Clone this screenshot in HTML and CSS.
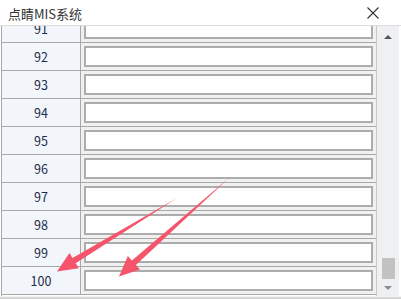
FILE: index.html
```html
<!DOCTYPE html>
<html lang="zh-CN">

<head>
	<meta charset="UTF-8">
	<title>点睛MIS系统</title>
	<link rel="stylesheet" href="styles.css">
</head>

<body>
	<div class="window">
		<div class="titlebar">
			<span class="title">点睛MIS系统</span>
			<span class="close">
				<svg width="12" height="12" viewBox="0 0 12 12">
					<path d="M0.5 0.5 L11.5 11.5 M11.5 0.5 L0.5 11.5" stroke="#333" stroke-width="1.1" fill="none" />
				</svg>
			</span>
		</div>
		<div class="content">
			<div class="grid-view">
				<div class="rows">
					<div class="row"><div class="col-no">91</div><div class="col-input"><input type="text"></div></div>
					<div class="row"><div class="col-no">92</div><div class="col-input"><input type="text"></div></div>
					<div class="row"><div class="col-no">93</div><div class="col-input"><input type="text"></div></div>
					<div class="row"><div class="col-no">94</div><div class="col-input"><input type="text"></div></div>
					<div class="row"><div class="col-no">95</div><div class="col-input"><input type="text"></div></div>
					<div class="row"><div class="col-no">96</div><div class="col-input"><input type="text"></div></div>
					<div class="row"><div class="col-no">97</div><div class="col-input"><input type="text"></div></div>
					<div class="row"><div class="col-no">98</div><div class="col-input"><input type="text"></div></div>
					<div class="row"><div class="col-no">99</div><div class="col-input"><input type="text"></div></div>
					<div class="row"><div class="col-no">100</div><div class="col-input"><input type="text"></div></div>
				</div>
			</div>
			<div class="scrollbar">
				<div class="scroll-btn"><span class="tri-up"></span></div>
				<div class="track"><div class="thumb"></div></div>
				<div class="scroll-btn down"><span class="tri-down"></span></div>
			</div>
		</div>
		<div class="bottom-edge"></div>

		<!-- annotation arrows -->
		<svg class="marks" width="401" height="299" viewBox="0 0 401 299">
			<polygon fill="#f5546b"
				points="177,198 75.7,263.2 78.8,268.3 57,271.5 69.4,252.9 72.5,258.0" />
			<polygon fill="#f5546b"
				points="229,178 135.9,264.9 139.9,269.4 119,276.5 127.9,256.0 131.9,260.5" />
		</svg>
	</div>
</body>

</html>
```

FILE: styles.css
```css
body {
	margin: 0;
	padding: 0;
	background: #ffffff;
	font-family: "Noto Sans CJK SC", "Noto Sans", sans-serif;
}

.window {
	position: relative;
	width: 401px;
	height: 299px;
	overflow: hidden;
	background: #ffffff;
}

.titlebar {
	display: flex;
	justify-content: space-between;
	align-items: center;
	height: 25px;
	border-bottom: 1px solid #dcdcdc;
	padding: 0 22px 0 8px;
}

.title {
	font-size: 13px;
	color: #333333;
	margin-top: 1px;
}

.close {
	display: flex;
	margin-top: 1px;
}

.content {
	display: flex;
	height: 270px;
	padding-left: 1px;
}

.grid-view {
	width: 375px;
	overflow: hidden;
	border-left: 1px solid #a8a8a8;
	border-right: 1px solid #c8c8c8;
}

.rows {
	margin-top: -11px;
}

.row {
	display: flex;
	height: 27px;
	border-bottom: 1px solid #a8a8a8;
}

.col-no {
	width: 78px;
	border-right: 1px solid #a8a8a8;
	background: #f2f6fa;
	color: #1c2b4a;
	font-size: 12.5px;
	display: flex;
	align-items: center;
	justify-content: center;
}

.col-input {
	flex: 1;
	padding: 3px;
	background: #f0f0f0;
	display: flex;
}

.col-input input {
	flex: 1;
	min-width: 0;
	margin: 0;
	padding: 0;
	height: 21px;
	box-sizing: border-box;
	border: 2px solid #acacac;
	background: #ffffff;
	outline: none;
}

.scrollbar {
	width: 22px;
	display: flex;
	flex-direction: column;
	background: #eff0f2;
	margin-right: 2px;
}

.scroll-btn {
	height: 22px;
	display: flex;
	align-items: center;
	justify-content: center;
}

.scroll-btn.down {
	height: 17px;
}

.tri-up {
	width: 0;
	height: 0;
	border-left: 4px solid transparent;
	border-right: 4px solid transparent;
	border-bottom: 4px solid #555555;
}

.tri-down {
	width: 0;
	height: 0;
	border-left: 4px solid transparent;
	border-right: 4px solid transparent;
	border-top: 4px solid #8c8c8c;
}

.track {
	flex: 1;
	display: flex;
	flex-direction: column;
	justify-content: flex-end;
	align-items: center;
}

.thumb {
	width: 13px;
	height: 21px;
	background: #c2c2c2;
}

.bottom-edge {
	height: 4px;
	border-top: 1px solid #f4f4f4;
	background: #d4d4d4;
}

.marks {
	position: absolute;
	left: 0;
	top: 0;
	pointer-events: none;
}
```
